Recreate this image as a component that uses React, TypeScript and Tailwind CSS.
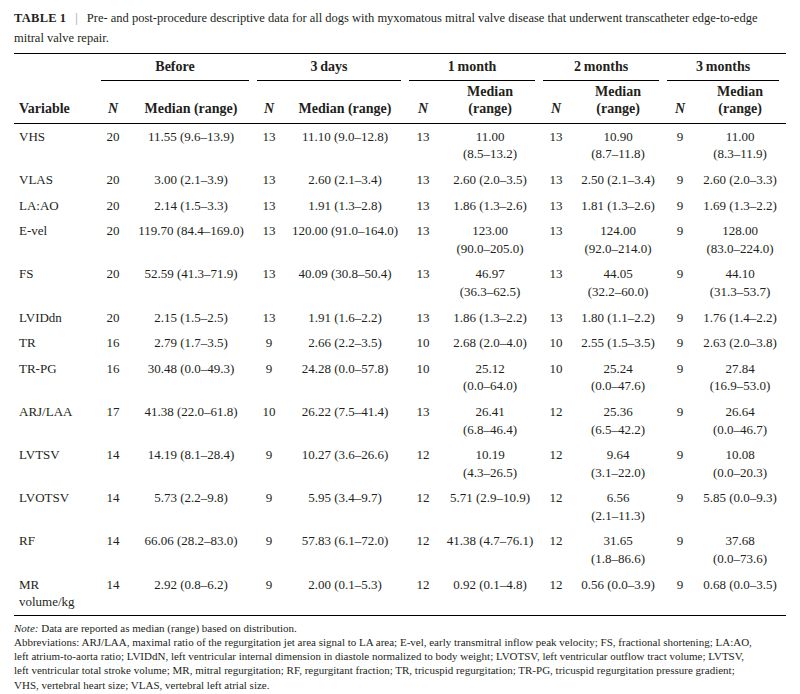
type Row = {
  name: string
  cells: string[]
}

const rows: Row[] = [
  { name: 'VHS', cells: ['20', '11.55 (9.6–13.9)', '13', '11.10 (9.0–12.8)', '13', '11.00\n(8.5–13.2)', '13', '10.90\n(8.7–11.8)', '9', '11.00\n(8.3–11.9)'] },
  { name: 'VLAS', cells: ['20', '3.00 (2.1–3.9)', '13', '2.60 (2.1–3.4)', '13', '2.60 (2.0–3.5)', '13', '2.50 (2.1–3.4)', '9', '2.60 (2.0–3.3)'] },
  { name: 'LA:AO', cells: ['20', '2.14 (1.5–3.3)', '13', '1.91 (1.3–2.8)', '13', '1.86 (1.3–2.6)', '13', '1.81 (1.3–2.6)', '9', '1.69 (1.3–2.2)'] },
  { name: 'E-vel', cells: ['20', '119.70 (84.4–169.0)', '13', '120.00 (91.0–164.0)', '13', '123.00\n(90.0–205.0)', '13', '124.00\n(92.0–214.0)', '9', '128.00\n(83.0–224.0)'] },
  { name: 'FS', cells: ['20', '52.59 (41.3–71.9)', '13', '40.09 (30.8–50.4)', '13', '46.97\n(36.3–62.5)', '13', '44.05\n(32.2–60.0)', '9', '44.10\n(31.3–53.7)'] },
  { name: 'LVIDdn', cells: ['20', '2.15 (1.5–2.5)', '13', '1.91 (1.6–2.2)', '13', '1.86 (1.3–2.2)', '13', '1.80 (1.1–2.2)', '9', '1.76 (1.4–2.2)'] },
  { name: 'TR', cells: ['16', '2.79 (1.7–3.5)', '9', '2.66 (2.2–3.5)', '10', '2.68 (2.0–4.0)', '10', '2.55 (1.5–3.5)', '9', '2.63 (2.0–3.8)'] },
  { name: 'TR-PG', cells: ['16', '30.48 (0.0–49.3)', '9', '24.28 (0.0–57.8)', '10', '25.12\n(0.0–64.0)', '10', '25.24\n(0.0–47.6)', '9', '27.84\n(16.9–53.0)'] },
  { name: 'ARJ/LAA', cells: ['17', '41.38 (22.0–61.8)', '10', '26.22 (7.5–41.4)', '13', '26.41\n(6.8–46.4)', '12', '25.36\n(6.5–42.2)', '9', '26.64\n(0.0–46.7)'] },
  { name: 'LVTSV', cells: ['14', '14.19 (8.1–28.4)', '9', '10.27 (3.6–26.6)', '12', '10.19\n(4.3–26.5)', '12', '9.64\n(3.1–22.0)', '9', '10.08\n(0.0–20.3)'] },
  { name: 'LVOTSV', cells: ['14', '5.73 (2.2–9.8)', '9', '5.95 (3.4–9.7)', '12', '5.71 (2.9–10.9)', '12', '6.56\n(2.1–11.3)', '9', '5.85 (0.0–9.3)'] },
  { name: 'RF', cells: ['14', '66.06 (28.2–83.0)', '9', '57.83 (6.1–72.0)', '12', '41.38 (4.7–76.1)', '12', '31.65\n(1.8–86.6)', '9', '37.68\n(0.0–73.6)'] },
  { name: 'MR\nvolume/kg', cells: ['14', '2.92 (0.8–6.2)', '9', '2.00 (0.1–5.3)', '12', '0.92 (0.1–4.8)', '12', '0.56 (0.0–3.9)', '9', '0.68 (0.0–3.5)'] },
]

const groups = ['Before', '3\u2009days', '1\u2009month', '2\u2009months', '3\u2009months']

const colWidths = ['w-[86px]', 'w-[26px]', 'w-[130px]', 'w-[26px]', 'w-[126px]', 'w-[30px]', 'w-[104px]', 'w-[28px]', 'w-[96px]', 'w-[28px]', 'w-[92px]']

export default function App() {
  return (
    <div className="w-[800px] h-[694px] bg-white px-[14px] text-[#231f20] font-['Liberation_Serif',serif] overflow-hidden">
      <div className="pt-[8px] pb-[5px] text-[12.5px] leading-[20px]">
        <span className="font-bold tracking-[0.3px]">TABLE{'\u2009'}1</span>
        <span className="text-[#9a9a9a] px-[9px]">|</span>
        <span>
          Pre- and post-procedure descriptive data for all dogs with myxomatous mitral valve disease that underwent transcatheter edge-to-edge
        </span>
        <br />
        <span>mitral valve repair.</span>
      </div>

      <table className="w-[772px] table-fixed border-collapse border-t border-b border-black text-[13px] leading-[17.6px]">
        <colgroup>
          {colWidths.map((w, i) => (
            <col key={i} className={w} />
          ))}
        </colgroup>
        <thead>
          <tr className="text-[14px] font-bold">
            <th />
            {groups.map((g) => (
              <th key={g} colSpan={2} className="p-0 font-bold">
                <div className="ml-[1px] mr-[7px] pt-[4px] pb-[4px] border-b border-black text-center">
                  {g}
                </div>
              </th>
            ))}
          </tr>
          <tr className="text-[14px] font-bold align-bottom border-b border-black">
            <th className="text-left pl-[5px] pt-[2px] pb-[5px]">Variable</th>
            <th className="text-center italic pb-[5px]">N</th>
            <th className="text-center pb-[5px]">Median (range)</th>
            <th className="text-center italic pb-[5px]">N</th>
            <th className="text-center pb-[5px]">Median (range)</th>
            <th className="text-center italic pb-[5px]">N</th>
            <th className="text-center pt-[2px] pb-[5px]">
              Median
              <br />
              (range)
            </th>
            <th className="text-center italic pb-[5px]">N</th>
            <th className="text-center pt-[2px] pb-[5px]">
              Median
              <br />
              (range)
            </th>
            <th className="text-center italic pb-[5px]">N</th>
            <th className="text-center pt-[2px] pb-[5px]">
              Median
              <br />
              (range)
            </th>
          </tr>
        </thead>
        <tbody>
          {rows.map((r) => (
            <tr key={r.name} className="align-top">
              <td className="pl-[5px] py-[4px] whitespace-pre-line">{r.name}</td>
              {r.cells.map((c, i) => (
                <td key={i} className="py-[4px] text-center whitespace-pre-line">
                  {c}
                </td>
              ))}
            </tr>
          ))}
        </tbody>
      </table>

      <div className="pt-[5px] text-[11px] leading-[14.2px]">
        <div>
          <span className="italic">Note:</span> Data are reported as median (range) based on distribution.
        </div>
        <div>
          Abbreviations: ARJ/LAA, maximal ratio of the regurgitation jet area signal to LA area; E-vel, early transmitral inflow peak velocity; FS, fractional shortening; LA:AO,
        </div>
        <div>
          left atrium-to-aorta ratio; LVIDdN, left ventricular internal dimension in diastole normalized to body weight; LVOTSV, left ventricular outflow tract volume; LVTSV,
        </div>
        <div>
          left ventricular total stroke volume; MR, mitral regurgitation; RF, regurgitant fraction; TR, tricuspid regurgitation; TR-PG, tricuspid regurgitation pressure gradient;
        </div>
        <div>VHS, vertebral heart size; VLAS, vertebral left atrial size.</div>
      </div>
    </div>
  )
}
